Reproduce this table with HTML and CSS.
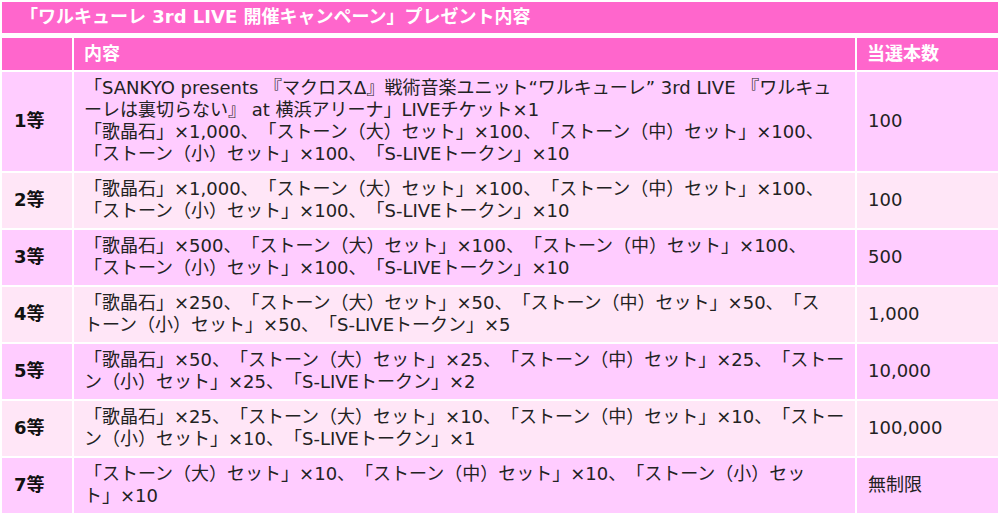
FILE: index.html
```html
<!DOCTYPE html>
<html lang="ja">
<head>
<meta charset="utf-8">
<link rel="stylesheet" href="styles.css">
</head>
<body>
<div class="wrap">
  <h2 class="title">「ワルキューレ 3rd LIVE 開催キャンペーン」プレゼント内容</h2>
  <table class="prize">
    <colgroup><col class="c-rank"><col class="c-body"><col class="c-num"></colgroup>
    <thead>
      <tr><th></th><th>内容</th><th>当選本数</th></tr>
    </thead>
    <tbody>
      <tr class="odd"><td class="rank">1等</td><td>「SANKYO presents 『マクロスΔ』戦術音楽ユニット“ワルキューレ” 3rd LIVE 『ワルキューレは裏切らない』 at 横浜アリーナ」LIVEチケット×1<br>「歌晶石」×1,000、「ストーン（大）セット」×100、「ストーン（中）セット」×100、「ストーン（小）セット」×100、「S-LIVEトークン」×10</td><td class="num">100</td></tr>
      <tr class="even"><td class="rank">2等</td><td>「歌晶石」×1,000、「ストーン（大）セット」×100、「ストーン（中）セット」×100、「ストーン（小）セット」×100、「S-LIVEトークン」×10</td><td class="num">100</td></tr>
      <tr class="odd"><td class="rank">3等</td><td>「歌晶石」×500、「ストーン（大）セット」×100、「ストーン（中）セット」×100、<br>「ストーン（小）セット」×100、「S-LIVEトークン」×10</td><td class="num">500</td></tr>
      <tr class="even"><td class="rank">4等</td><td>「歌晶石」×250、「ストーン（大）セット」×50、「ストーン（中）セット」×50、「ス<br>トーン（小）セット」×50、「S-LIVEトークン」×5</td><td class="num">1,000</td></tr>
      <tr class="odd"><td class="rank">5等</td><td>「歌晶石」×50、「ストーン（大）セット」×25、「ストーン（中）セット」×25、「ストーン（小）セット」×25、「S-LIVEトークン」×2</td><td class="num">10,000</td></tr>
      <tr class="even"><td class="rank">6等</td><td>「歌晶石」×25、「ストーン（大）セット」×10、「ストーン（中）セット」×10、「ストーン（小）セット」×10、「S-LIVEトークン」×1</td><td class="num">100,000</td></tr>
      <tr class="odd"><td class="rank">7等</td><td>「ストーン（大）セット」×10、「ストーン（中）セット」×10、「ストーン（小）セッ<br>ト」×10</td><td class="num">無制限</td></tr>
    </tbody>
  </table>
</div>
</body>
</html>
```

FILE: styles.css
```css
html, body {
  margin: 0;
  padding: 0;
  background: #ffffff;
}
body {
  font-family: "DejaVu Sans", "Noto Sans CJK JP", sans-serif;
  font-size: 18px;
  line-height: 22px;
  color: #222222;
  text-spacing-trim: space-all;
}
.wrap {
  width: 1000px;
  padding-top: 2px;
}
.title {
  margin: 0 2px 3px 2px;
  background: #ff66cc;
  color: #ffffff;
  font-size: 18px;
  font-weight: bold;
  line-height: 22px;
  padding: 4px 18px 5px;
}
.prize {
  width: 1000px;
  border-collapse: separate;
  border-spacing: 2px;
  margin: 0;
  table-layout: fixed;
}
.c-rank { width: 70px; }
.c-num { width: 141px; }
.prize th {
  background: #ff66cc;
  color: #ffffff;
  font-weight: bold;
  text-align: left;
  padding: 5px 10px;
  height: 22px;
}
.prize td {
  padding: 5px 10px 6px 10px;
  vertical-align: middle;
}
.odd td { background: #ffccff; }
.even td { background: #ffe6f7; }
.prize td.rank {
  font-weight: bold;
  color: #111111;
  padding-left: 12px;
}
.prize td.num {
  padding-left: 11px;
}
```
